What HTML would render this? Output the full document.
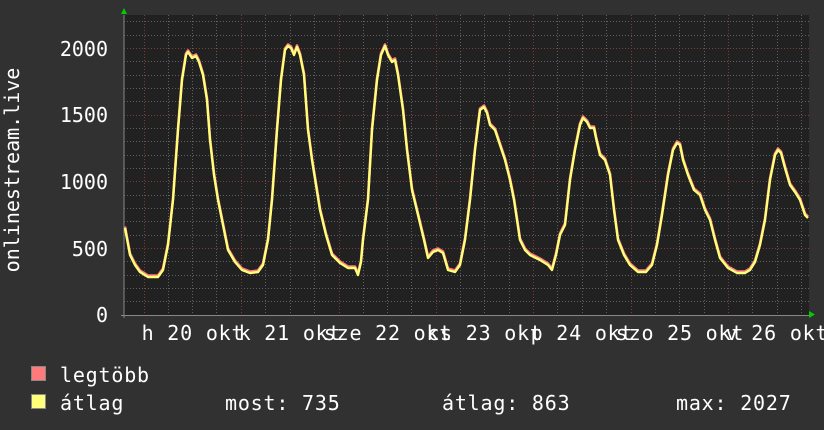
<!DOCTYPE html>
<html><head><meta charset="utf-8"><style>
html,body{margin:0;padding:0;background:#313131;}
svg{display:block}
text{font-family:"DejaVu Sans Mono","Liberation Mono",monospace;fill:#fff;font-size:20px;}
</style></head><body>
<svg width="824" height="430" viewBox="0 0 824 430" xmlns="http://www.w3.org/2000/svg">
<defs>
<path id="p" d="M125,228 L130,255 L135,265 L140,272 L148,277 L158,277 L163,270 L168,245 L173,200 L178,130 L182,80 L186,55 L188,52 L192,58 L196,56 L199,62 L203,75 L207,100 L210,140 L214,175 L218,200 L223,225 L228,250 L235,262 L242,270 L250,273 L258,272 L263,265 L268,240 L272,200 L277,130 L281,80 L285,50 L288,46 L291,48 L294,55 L297,47 L300,55 L304,75 L308,130 L312,160 L316,185 L320,210 L326,235 L332,255 L340,263 L348,268 L355,268 L358,275 L361,262 L363,240 L368,200 L372,130 L377,80 L381,55 L385,46 L388,55 L392,62 L395,60 L398,75 L403,110 L407,150 L412,190 L418,215 L424,240 L428,258 L433,252 L438,250 L443,253 L448,270 L455,272 L460,265 L465,240 L470,200 L475,150 L480,110 L484,107 L487,113 L490,125 L495,130 L500,145 L505,160 L510,180 L514,200 L520,240 L525,250 L530,255 L540,260 L548,265 L552,270 L556,255 L560,235 L565,225 L570,180 L575,150 L580,125 L583,118 L587,122 L590,128 L594,128 L596,138 L600,155 L605,160 L610,175 L614,210 L618,240 L624,255 L630,265 L638,272 L646,272 L652,265 L657,245 L662,215 L668,175 L673,150 L677,143 L680,145 L683,160 L688,175 L694,190 L700,195 L705,210 L710,220 L715,240 L720,258 L728,268 L737,273 L745,273 L750,270 L755,262 L760,245 L765,220 L770,180 L775,155 L778,150 L781,153 L785,168 L790,185 L795,192 L800,200 L805,215 L808,218"/>
</defs>
<rect width="824" height="430" fill="#313131"/>
<rect x="124" y="15" width="685" height="300" fill="#212121"/>
<g stroke="#606060" stroke-width="1" stroke-dasharray="1,2" shape-rendering="crispEdges">
<path d="M124 301.5H809M124 288.5H809M124 275.5H809M124 261.5H809M124 235.5H809M124 221.5H809M124 208.5H809M124 195.5H809M124 168.5H809M124 155.5H809M124 141.5H809M124 128.5H809M124 101.5H809M124 88.5H809M124 75.5H809M124 61.5H809M124 35.5H809M124 21.5H809"/>
<path d="M168.5 15V318M192.5 15V318M216.5 15V318M265.5 15V318M290.5 15V318M314.5 15V318M363.5 15V318M387.5 15V318M411.5 15V318M460.5 15V318M484.5 15V318M509.5 15V318M557.5 15V318M582.5 15V318M606.5 15V318M655.5 15V318M679.5 15V318M704.5 15V318M752.5 15V318M777.5 15V318M801.5 15V318"/>
</g>
<g stroke="#803c3c" stroke-width="1" stroke-dasharray="1,2" shape-rendering="crispEdges">
<path d="M124 48.5H809M124 115.5H809M124 181.5H809M124 248.5H809"/>
<path d="M144.5 15V318M241.5 15V318M339.5 15V318M436.5 15V318M533.5 15V318M631.5 15V318M728.5 15V318"/>
</g>
<path d="M124 15V318M121 315.5H812" stroke="#888" stroke-width="1" fill="none"/>
<polygon points="121,14 127,14 124,8" fill="#0c0"/>
<polygon points="809,311 809,318 815,314.5" fill="#0c0"/>
<g fill="none" stroke-linejoin="round">
<use href="#p" transform="translate(0,-1.5)" stroke="#ff7b7b" stroke-width="2.6"/>
<use href="#p" stroke="#ffff7a" stroke-width="2.4"/>
</g>
<g text-anchor="end">
<text x="108" y="56">2000</text>
<text x="108" y="122">1500</text>
<text x="108" y="189">1000</text>
<text x="108" y="256">500</text>
<text x="108" y="322">0</text>
</g>
<text transform="translate(19,170) rotate(-90)" text-anchor="middle">onlinestream.live</text>
<g text-anchor="middle" letter-spacing="0.8">
<text x="193" y="340">h 20 okt</text>
<text x="290" y="340">k 21 okt</text>
<text x="388" y="340">sze 22 okt</text>
<text x="485" y="340">cs 23 okt</text>
<text x="582" y="340">p 24 okt</text>
<text x="680" y="340">szo 25 okt</text>
<text x="777" y="340">v 26 okt</text>
</g>
<rect x="31.5" y="366.5" width="14" height="14" fill="#ff7b7b" stroke="#888"/>
<rect x="31.5" y="394.5" width="14" height="14" fill="#ffff7a" stroke="#888"/>
<g letter-spacing="0.8">
<text x="60" y="382">legtöbb</text>
<text x="60" y="410">átlag</text>
<text x="225" y="410">most: 735</text>
<text x="442" y="410">átlag: 863</text>
<text x="676" y="410">max: 2027</text>
</g>
</svg>
</body></html>
